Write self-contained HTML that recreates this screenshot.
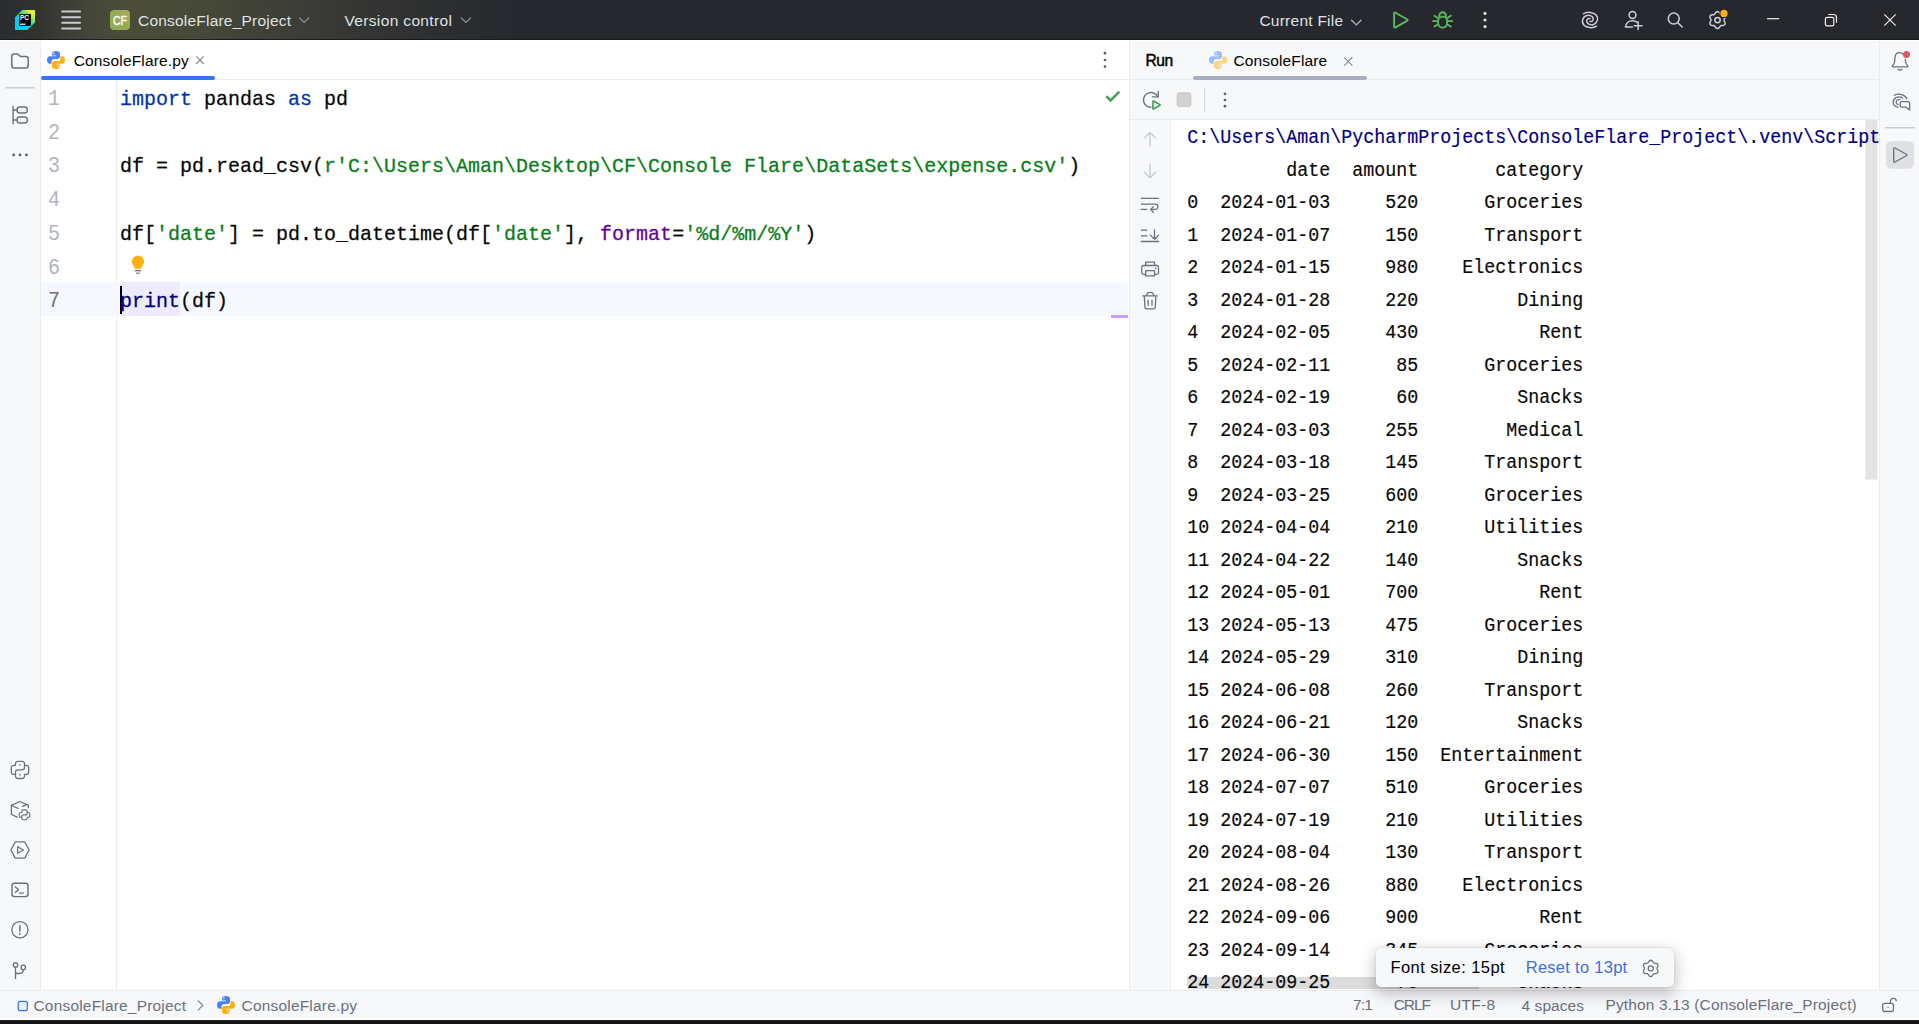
<!DOCTYPE html>
<html>
<head>
<meta charset="utf-8">
<title>ConsoleFlare_Project – ConsoleFlare.py</title>
<style>
*{box-sizing:border-box;margin:0;padding:0}
html,body{width:1919px;height:1024px;overflow:hidden;background:#f7f8fa;font-family:"Liberation Sans",sans-serif;}
.abs{position:absolute}
.t{position:absolute;line-height:20px;white-space:pre;font-size:15.5px;color:#6c707e}
svg{position:absolute;overflow:visible}
.ic{fill:none;stroke:#6c707e;stroke-width:1.25;stroke-linecap:round;stroke-linejoin:round}
.icw{fill:none;stroke:#ced0d6;stroke-width:1.3;stroke-linecap:round;stroke-linejoin:round}

/* ---------- title bar ---------- */
#titlebar{left:0;top:0;width:1919px;height:40px;border-bottom:1px solid #1b1c1f;
 background:linear-gradient(90deg,#2a2b2f 0px,#33342f 40px,#44463a 90px,#4b4d39 125px,#494b39 180px,#3f4037 270px,#353633 360px,#2c2d30 450px,#27282e 520px,#27282e 100%);}
#titlebar .t{color:#dfe1e5}

/* ---------- left tool strip ---------- */
#lefttb{left:0;top:40px;width:41px;height:950px;background:#f7f8fa;border-right:1px solid #ebecf0}

/* ---------- editor ---------- */
#editor{left:41px;top:40px;width:1088px;height:950px;background:#fff;overflow:hidden}
#edtabs{left:0;top:0;width:1088px;height:40px;border-bottom:1px solid #ebecf0;background:#fff}
#gutterline{left:75px;top:40px;width:1px;height:910px;background:#ebecf0}
.ln{position:absolute;left:7px;transform:scaleY(1.07);transform-origin:0 22.2px;font-family:"Liberation Mono",monospace;font-size:20px;line-height:33.75px;height:33.75px;color:#aeb3c2;white-space:pre}
.cl{position:absolute;left:79px;-webkit-text-stroke:.25px currentColor;transform:scaleY(1.03);transform-origin:0 22.2px;font-family:"Liberation Mono",monospace;font-size:20px;line-height:33.75px;height:33.75px;color:#080808;white-space:pre}
.kw{color:#0033b3}.st{color:#067d17}.na{color:#660099}.bi{color:#000080}

/* ---------- run tool window ---------- */
#splitline{left:1129px;top:40px;width:1px;height:950px;background:#ebecf0}
#run{left:1130px;top:40px;width:749px;height:950px;background:#f7f8fa;overflow:hidden}
#runhdr{left:0;top:0;width:749px;height:40px;border-bottom:1px solid #ebecf0}
#runbar{left:0;top:40px;width:749px;height:40px;border-bottom:1px solid #ebecf0}
#rungutter{left:0;top:80px;width:41px;height:870px;border-right:1px solid #ebecf0}
#console{left:41px;top:80px;width:708px;height:870px;background:#fff;overflow:hidden}
.co{position:absolute;left:16.3px;transform:scaleY(1.09);transform-origin:0 21.13px;-webkit-text-stroke:.16px currentColor;font-family:"Liberation Mono",monospace;font-size:18.33px;line-height:32.5px;height:32.5px;color:#080808;white-space:pre}

/* ---------- right tool strip ---------- */
#righttb{left:1879px;top:40px;width:40px;height:950px;background:#f7f8fa;border-left:1px solid #ebecf0}

/* ---------- status bar ---------- */
#status{left:0;top:990px;width:1919px;height:29px;background:#f7f8fa;border-top:1px solid #ebecf0}
#bottombar{left:0;top:1019px;width:1919px;height:5px;background:#141414;border-top:1px solid #fff;box-shadow:inset 0 1px 0 #222}
</style>
</head>
<body>

<!-- ================= TITLE BAR ================= -->
<div id="titlebar" class="abs">
  
  <!-- PyCharm logo -->
  <svg style="left:15px;top:10px" width="20" height="20" viewBox="0 0 20 20">
    <defs><linearGradient id="pcg" x1="0" y1="1" x2="1" y2="0">
      <stop offset="0" stop-color="#00cdfc"/><stop offset=".38" stop-color="#0ccbf0"/><stop offset=".62" stop-color="#4fd58f"/><stop offset=".85" stop-color="#e6f03a"/><stop offset="1" stop-color="#fcf40f"/></linearGradient></defs>
    <path d="M7.3 0H19a1 1 0 0 1 1 1v11.6L12.4 20H1a1 1 0 0 1-1-1V7.3z" fill="url(#pcg)"/>
    <rect x="4.2" y="4.1" width="11.7" height="11.7" fill="#000"/>
    <text x="4.9" y="10" font-family="Liberation Sans" font-weight="700" font-size="6.4" fill="#fff" textLength="9" lengthAdjust="spacingAndGlyphs">PC</text>
    <rect x="5.1" y="13.6" width="5.4" height="1.2" fill="#fff"/>
  </svg>
  <!-- main menu (hamburger) -->
  <!-- project badge -->
  <div class="abs" style="left:110px;top:10px;width:20px;height:20px;border-radius:4px;background:linear-gradient(45deg,#86ac52,#a6ab5e)"></div>
  <span class="abs" style="left:112.9px;top:11.2px;width:18px;line-height:20px;font-size:12.8px;color:#fff;-webkit-text-stroke:.4px #fff;transform:scaleX(.82);transform-origin:0 0;white-space:pre">CF</span>
  <!-- chevrons -->
  <svg style="left:0;top:0" width="1919" height="40" viewBox="0 0 1919 40">
    <path class="icw" style="stroke:#8d9098" d="M299.6 18l4.6 4.4 4.6-4.4"/>
    <path class="icw" style="stroke:#8d9098" d="M461.2 18l4.7 4.4 4.7-4.4"/>
    <path class="icw" style="stroke:#b4b8bf" d="M1351.6 20.3l4.7 4.6 4.7-4.6"/>
    <!-- main menu -->
    <g fill="#c9cbd1"><rect x="61.3" y="10.6" width="19.7" height="2" rx=".8"/><rect x="61.3" y="16.25" width="19.7" height="2" rx=".8"/><rect x="61.3" y="21.8" width="19.7" height="2" rx=".8"/><rect x="61.3" y="27.5" width="19.7" height="2" rx=".8"/></g>
    <!-- run -->
    <path d="M1394.10 13.60Q1394.10 12.00 1395.49 12.78L1407.01 19.27Q1408.40 20.05 1407.01 20.83L1395.49 27.32Q1394.10 28.10 1394.10 26.50Z" fill="none" stroke="#5fb865" stroke-width="1.85" stroke-linejoin="round"/>
    <!-- debug -->
    <g fill="none" stroke="#5fb865" stroke-width="1.8" stroke-linecap="round">
      <rect x="1438.1" y="16.7" width="9" height="10.9" rx="4.5"/>
      <path d="M1439.3 16.2a3.3 3.9 0 0 1 6.6 0" stroke-width="2"/>
      <path d="M1434.400 15.800l3.400 2.200M1433 21.200h4.400M1434.400 26.600l3.400-2.200M1450.800 15.800l-3.400 2.200M1452.200 21.200h-4.400M1450.800 26.600l-3.400-2.200"/>
    </g>
    <!-- more -->
    <circle cx="1485" cy="13.4" r="1.55" fill="#dfe1e5"/><circle cx="1485" cy="20" r="1.55" fill="#dfe1e5"/><circle cx="1485" cy="26.6" r="1.55" fill="#dfe1e5"/>
    <!-- AI assistant spiral -->
    <g class="icw" style="stroke-width:1.5">
      <path d="M1583.3 13.8C1587 11.6 1593.5 11.9 1596.2 15C1598.8 18 1597.6 22.6 1594 24.2C1591 25.6 1587.3 24.2 1586.8 21.5C1586.4 19.4 1588.3 18 1590 18.6"/>
      <path d="M1596.6 26.2C1593 28.4 1586.5 28.1 1583.8 25C1581.2 22 1582.4 17.4 1586 15.8C1589 14.4 1592.7 15.8 1593.2 18.5C1593.6 20.6 1591.7 22 1590 21.4"/>
    </g>
    <!-- code with me -->
    <g class="icw" style="stroke-width:1.5">
      <circle cx="1632.5" cy="15" r="3.4"/>
      <path d="M1632.4 27.1h-6.9c.3-3.6 3.1-6.3 7-6.3 1.9 0 3.500 .600 4.700 1.600"/>
      <path d="M1634.2 25.7h7.8M1638.100 21.700v7.900"/>
    </g>
    <!-- search -->
    <g class="icw" style="stroke-width:1.5"><circle cx="1673.75" cy="18.6" r="5.5"/><path d="M1677.8 22.800l4.400 4.200"/></g>
    <!-- settings -->
    <path class="icw" style="stroke-width:1.5" d="M1724.00,20.10 L1724.11,19.52 L1724.39,18.88 L1724.74,18.16 L1725.02,17.36 L1725.08,16.56 L1724.86,15.85 L1724.35,15.30 L1723.63,14.96 L1722.80,14.80 L1722.00,14.74 L1721.31,14.67 L1720.75,14.47 L1720.30,14.09 L1719.89,13.52 L1719.44,12.86 L1718.89,12.22 L1718.23,11.77 L1717.50,11.60 L1716.77,11.77 L1716.11,12.22 L1715.56,12.86 L1715.11,13.52 L1714.70,14.09 L1714.25,14.47 L1713.69,14.67 L1713.00,14.74 L1712.20,14.80 L1711.37,14.96 L1710.65,15.30 L1710.14,15.85 L1709.92,16.56 L1709.98,17.36 L1710.26,18.16 L1710.61,18.88 L1710.89,19.52 L1711.00,20.10 L1710.89,20.68 L1710.61,21.32 L1710.26,22.04 L1709.98,22.84 L1709.92,23.64 L1710.14,24.35 L1710.65,24.90 L1711.37,25.24 L1712.20,25.40 L1713.00,25.46 L1713.69,25.53 L1714.25,25.73 L1714.70,26.11 L1715.11,26.68 L1715.56,27.34 L1716.11,27.98 L1716.77,28.43 L1717.50,28.60 L1718.23,28.43 L1718.89,27.98 L1719.44,27.34 L1719.89,26.68 L1720.30,26.11 L1720.75,25.73 L1721.31,25.53 L1722.00,25.46 L1722.80,25.40 L1723.63,25.24 L1724.35,24.90 L1724.86,24.35 L1725.08,23.64 L1725.02,22.84 L1724.74,22.04 L1724.39,21.32 L1724.11,20.68Z"/>
    <circle class="icw" style="stroke-width:1.5" cx="1717.5" cy="20.1" r="2.7"/>
    <circle cx="1724" cy="13.4" r="4.6" fill="#27282e"/>
    <circle cx="1724" cy="13.4" r="3.6" fill="#ffaf0f"/>
    <!-- window controls -->
    <path d="M1767.1 18.7h12.100" stroke="#f0f1f2" stroke-width="1.2" fill="none"/>
    <g fill="none" stroke="#f0f1f2" stroke-width="1.2">
      <rect x="1825.4" y="17.400" width="8.400" height="8.400" rx="1.6"/>
      <path d="M1828.300 14.500h5.200a3 3 0 0 1 3 3v5.200"/>
    </g>
    <path d="M1884.300 14.300l11.400 11.400M1895.700 14.300l-11.400 11.400" stroke="#f0f1f2" stroke-width="1.1" fill="none"/>
  </svg>
  <span class="t" style="left:138px;top:10.5px;letter-spacing:.21px">ConsoleFlare_Project</span>
  <span class="t" style="left:344.4px;top:10.5px;letter-spacing:.36px">Version control</span>
  <span class="t" style="left:1259.4px;top:10.5px;letter-spacing:.25px">Current File</span>
</div>

<div class="abs" style="left:0;top:40px;width:1919px;height:1px;background:#fff;z-index:5"></div>
<!-- ================= LEFT STRIP ================= -->
<div id="lefttb" class="abs"></div>

<!-- ================= EDITOR ================= -->
<div id="editor" class="abs">
  <div id="edtabs" class="abs">
    <span class="t" style="left:32.7px;top:10.9px;letter-spacing:.16px;color:#000">ConsoleFlare.py</span>
    <div class="abs" style="left:0;top:35.7px;width:174px;height:4.3px;background:#3574f0;border-radius:2px"></div>
  </div>
  <div id="gutterline" class="abs"></div>
  <!-- current line highlight -->
  <div class="abs" style="left:0;top:242.3px;width:1087px;height:33.5px;background:#f5f8fe"></div>
  <div class="abs" style="left:79px;top:242.3px;width:60px;height:33.5px;background:#edebfc"></div>
  <div class="abs" style="left:79px;top:246.3px;width:2px;height:27.5px;background:#000"></div>
  <!-- error stripe mark -->
  <div class="abs" style="left:1070px;top:275.2px;width:17px;height:2.7px;background:#cb9bfa"></div>
  <div id="lines">
<div class="ln" style="top:42.80px">1</div>
<div class="cl" style="top:42.80px"><span class="kw">import</span> pandas <span class="kw">as</span> pd</div>
<div class="ln" style="top:76.55px">2</div>
<div class="ln" style="top:110.30px">3</div>
<div class="cl" style="top:110.30px">df = pd.read_csv(<span class="st">r'C:\Users\Aman\Desktop\CF\Console Flare\DataSets\expense.csv'</span>)</div>
<div class="ln" style="top:144.05px">4</div>
<div class="ln" style="top:177.80px">5</div>
<div class="cl" style="top:177.80px">df[<span class="st">'date'</span>] = pd.to_datetime(df[<span class="st">'date'</span>], <span class="na">format</span>=<span class="st">'%d/%m/%Y'</span>)</div>
<div class="ln" style="top:211.55px">6</div>
<div class="ln" style="top:245.30px;color:#6c707e">7</div>
<div class="cl" style="top:245.30px"><span class="bi">print</span>(df)</div>
</div>
</div>
<div id="splitline" class="abs"></div>

<!-- ================= RUN ================= -->
<div id="run" class="abs">
  <div id="runhdr" class="abs">
    <span class="t" style="left:15.6px;top:10.9px;font-size:15.6px;font-weight:400;-webkit-text-stroke:.45px #000;letter-spacing:-.5px;color:#000">Run</span>
    <span class="t" style="left:103.5px;top:10.8px;letter-spacing:.13px;color:#000">ConsoleFlare</span>
    <div class="abs" style="left:63px;top:36px;width:174px;height:4px;background:#a8adbd;border-radius:2px"></div>
  </div>
  <div id="runbar" class="abs"></div>
  <div id="rungutter" class="abs"></div>
  <div id="console" class="abs">
<div class="abs" style="left:695px;top:0;width:11.4px;height:359.3px;background:#e3e3e3;box-shadow:0 0 0 1px #f0f0f0"></div>
<div class="abs" style="left:16px;top:857px;width:292px;height:11.5px;background:#dcdcdc"></div>
<div class="co" style="top:3.10px;color:#000080">C:\Users\Aman\PycharmProjects\ConsoleFlare_Project\.venv\Scripts\python.exe C:\Users\Aman\PycharmProjects\ConsoleFlare_Project\ConsoleFlare.py</div>
<div class="co" style="top:35.60px">         date  amount       category</div>
<div class="co" style="top:68.10px">0  2024-01-03     520      Groceries</div>
<div class="co" style="top:100.60px">1  2024-01-07     150      Transport</div>
<div class="co" style="top:133.10px">2  2024-01-15     980    Electronics</div>
<div class="co" style="top:165.60px">3  2024-01-28     220         Dining</div>
<div class="co" style="top:198.10px">4  2024-02-05     430           Rent</div>
<div class="co" style="top:230.60px">5  2024-02-11      85      Groceries</div>
<div class="co" style="top:263.10px">6  2024-02-19      60         Snacks</div>
<div class="co" style="top:295.60px">7  2024-03-03     255        Medical</div>
<div class="co" style="top:328.10px">8  2024-03-18     145      Transport</div>
<div class="co" style="top:360.60px">9  2024-03-25     600      Groceries</div>
<div class="co" style="top:393.10px">10 2024-04-04     210      Utilities</div>
<div class="co" style="top:425.60px">11 2024-04-22     140         Snacks</div>
<div class="co" style="top:458.10px">12 2024-05-01     700           Rent</div>
<div class="co" style="top:490.60px">13 2024-05-13     475      Groceries</div>
<div class="co" style="top:523.10px">14 2024-05-29     310         Dining</div>
<div class="co" style="top:555.60px">15 2024-06-08     260      Transport</div>
<div class="co" style="top:588.10px">16 2024-06-21     120         Snacks</div>
<div class="co" style="top:620.60px">17 2024-06-30     150  Entertainment</div>
<div class="co" style="top:653.10px">18 2024-07-07     510      Groceries</div>
<div class="co" style="top:685.60px">19 2024-07-19     210      Utilities</div>
<div class="co" style="top:718.10px">20 2024-08-04     130      Transport</div>
<div class="co" style="top:750.60px">21 2024-08-26     880    Electronics</div>
<div class="co" style="top:783.10px">22 2024-09-06     900           Rent</div>
<div class="co" style="top:815.60px">23 2024-09-14     345      Groceries</div>
<div class="co" style="top:848.10px">24 2024-09-25      70         Snacks</div>
<div class="co" style="top:880.60px">25 2024-10-02     410           Rent</div>
</div>
</div>

<!-- ================= RIGHT STRIP ================= -->
<div id="righttb" class="abs"></div>


<!-- ================= STATUS BAR ================= -->
<div id="status" class="abs">
  <span class="t" style="left:33.5px;top:5.3px;letter-spacing:.18px">ConsoleFlare_Project</span>
  <span class="t" style="left:241.5px;top:5.3px;letter-spacing:.19px">ConsoleFlare.py</span>
  <span class="t" style="left:1353px;top:4.3px;letter-spacing:-.9px">7:1</span>
  <span class="t" style="left:1393.7px;top:4.3px;letter-spacing:-1.04px">CRLF</span>
  <span class="t" style="left:1450px;top:4.3px;letter-spacing:.32px">UTF-8</span>
  <span class="t" style="left:1521.6px;top:5.3px;letter-spacing:.04px">4 spaces</span>
  <span class="t" style="left:1605.4px;top:4.3px;letter-spacing:.15px">Python 3.13 (ConsoleFlare_Project)</span>
</div>
<div id="bottombar" class="abs"></div>


<!-- ================= FONT SIZE POPUP + h-scrollbar ================= -->
<div id="popup" class="abs" style="left:1376.3px;top:947.8px;width:297.3px;height:39.2px;background:#f7f8fa;border-radius:5px;box-shadow:0 5px 16px 1px rgba(0,0,0,.26),0 0 2px rgba(0,0,0,.14)">
  <span class="t" style="left:14.2px;top:9.4px;font-size:16.5px;letter-spacing:.42px;color:#000">Font size: 15pt</span>
  <span class="t" style="left:149.4px;top:9.4px;font-size:16.5px;letter-spacing:.28px;color:#416fd9">Reset to 13pt</span>
  <svg style="left:0;top:0" width="297" height="38" viewBox="1376.3 947.7 297 38"><path class="ic" style="stroke-width:1.3" d="M1657.25,968.10 L1657.35,967.54 L1657.62,966.93 L1657.95,966.24 L1658.21,965.47 L1658.27,964.71 L1658.06,964.02 L1657.57,963.50 L1656.88,963.17 L1656.09,963.01 L1655.32,962.95 L1654.66,962.88 L1654.12,962.69 L1653.70,962.32 L1653.30,961.78 L1652.86,961.15 L1652.33,960.54 L1651.70,960.11 L1651.00,959.95 L1650.30,960.11 L1649.67,960.54 L1649.14,961.15 L1648.70,961.78 L1648.30,962.32 L1647.88,962.69 L1647.34,962.88 L1646.68,962.95 L1645.91,963.01 L1645.12,963.17 L1644.43,963.50 L1643.94,964.02 L1643.73,964.71 L1643.79,965.47 L1644.05,966.24 L1644.38,966.93 L1644.65,967.54 L1644.75,968.10 L1644.65,968.66 L1644.38,969.27 L1644.05,969.96 L1643.79,970.73 L1643.73,971.49 L1643.94,972.18 L1644.43,972.70 L1645.12,973.03 L1645.91,973.19 L1646.68,973.25 L1647.34,973.32 L1647.88,973.51 L1648.30,973.88 L1648.70,974.42 L1649.14,975.05 L1649.67,975.66 L1650.30,976.09 L1651.00,976.25 L1651.70,976.09 L1652.33,975.66 L1652.86,975.05 L1653.30,974.42 L1653.70,973.88 L1654.12,973.51 L1654.66,973.32 L1655.32,973.25 L1656.09,973.19 L1656.88,973.03 L1657.57,972.70 L1658.06,972.18 L1658.27,971.49 L1658.21,970.73 L1657.95,969.96 L1657.62,969.27 L1657.35,968.66Z"/><circle class="ic" style="stroke-width:1.3" cx="1651" cy="968.1" r="2.5"/></svg>
</div>

<!-- ================= ICON OVERLAY (page coordinates) ================= -->
<svg id="icons" style="left:0;top:0;pointer-events:none" width="1919" height="1024" viewBox="0 0 1919 1024">

  <!-- ===== left strip ===== -->
  <g class="ic" style="stroke-width:1.5">
    <path d="M11.800 56.400a2.500 2.500 0 0 1 2.500-2.500h2.900a1.600 1.600 0 0 1 1.200.500l2.100 2.200h5.200a2.500 2.500 0 0 1 2.500 2.500v6.300a2.500 2.500 0 0 1-2.500 2.500h-11.400a2.500 2.500 0 0 1-2.500-2.500z"/>
  </g>
  <path d="M5.200 87.800h29.600" stroke="#c9ccd6" stroke-width="1.400" fill="none"/>
  <g class="ic" style="stroke-width:1.400">
    <path d="M13.100 106.300v17.400M13.100 110h3.900M13.100 120h3.900"/>
    <rect x="17" y="107" width="10.300" height="6" rx="2.700"/>
    <rect x="17" y="117" width="10.300" height="6" rx="2.700"/>
  </g>
  <g fill="#5a5d6b"><circle cx="13.700" cy="154.900" r="1.400"/><circle cx="20" cy="154.900" r="1.400"/><circle cx="26.400" cy="154.900" r="1.400"/></g>

  <!-- python console -->
  <g class="ic" style="stroke-width:1.300">
    <path d="M15.500 765.400V763.700A2.400 2.400 0 0 1 17.900 761.300H22.100A2.400 2.400 0 0 1 24.500 763.700V765.400H26.300A2.400 2.400 0 0 1 28.700 767.800V772A2.400 2.400 0 0 1 26.300 774.400H24.500V776.100A2.400 2.400 0 0 1 22.100 778.500H17.900A2.400 2.400 0 0 1 15.500 776.100V774.400H13.700A2.400 2.400 0 0 1 11.300 772V767.800A2.400 2.400 0 0 1 13.700 765.400Z"/>
    <path d="M15.500 774.400V772.300a2.400 2.400 0 0 1 2.400-2.400h4.200a2.400 2.400 0 0 0 2.400-2.400V765.400"/>
  </g>
  <g fill="#6c707e"><rect x="19.200" y="764.100" width="1.500" height="1.500"/><rect x="19.200" y="774.100" width="1.500" height="1.500"/></g>

  <!-- python packages -->
  <g class="ic" style="stroke-width:1.300">
    <path d="M28.300 807.600V805.300L19.900 801.500L11.400 805.300V814.500L17.200 817.200"/>
    <path d="M11.400 805.300L18.300 808.500M26.600 804.600l-4 1.800"/>
    <path d="M21.800 812.500v-1.100a1.500 1.500 0 0 1 1.500-1.500h2.400a1.500 1.500 0 0 1 1.500 1.500v1.100h1.100a1.500 1.500 0 0 1 1.500 1.500v1.700a1.500 1.500 0 0 1-1.500 1.500h-1.100v1.100a1.500 1.500 0 0 1-1.500 1.500h-2.400a1.500 1.500 0 0 1-1.500-1.500v-1.100h-1.100a1.500 1.500 0 0 1-1.500-1.500v-1.700a1.500 1.500 0 0 1 1.500-1.500z" style="stroke-width:1.100"/>
    <path d="M21.800 817.200v-.9a1.400 1.400 0 0 1 1.400-1.400h2.600a1.400 1.400 0 0 0 1.400-1.400v-1" style="stroke-width:1.100"/>
  </g>

  <!-- services -->
  <g class="ic" style="stroke-width:1.300">
    <path d="M10.800 850L15.300 841.900H24.700L29.200 850L24.700 858.100H15.300Z"/>
    <path d="M17.700 846.700v6.600l5.700-3.300z"/>
  </g>

  <!-- terminal -->
  <g class="ic" style="stroke-width:1.400">
    <rect x="12" y="883.300" width="16" height="13.300" rx="2.500"/>
    <path d="M15.400 887l3.200 2.700-3.200 2.700M19.400 893.100h4"/>
  </g>

  <!-- problems -->
  <g class="ic" style="stroke-width:1.300">
    <circle cx="19.900" cy="929.800" r="8.100"/>
    <path d="M19.900 925.800v5.500" style="stroke-width:1.500"/>
  </g>
  <circle cx="19.900" cy="933.700" r=".95" fill="#6c707e"/>

  <!-- git -->
  <g class="ic" style="stroke-width:1.300">
    <circle cx="15.500" cy="964.900" r="2.200"/>
    <circle cx="23.300" cy="967.400" r="2.200"/>
    <path d="M15.500 967.200v11.200M23.300 969.700c0 2.700-2.100 3.800-4.600 3.800h-3.200"/>
  </g>

  <!-- ===== editor tab ===== -->
  <g transform="translate(47 51)"><path fill="#4682fa" d="M8.9 0C6.300 0 5.100 1.100 5.100 2.700V4.600H9V5.200H2.900C1.100 5.200 0 6.600 0 9C0 11.400 1.100 12.800 2.900 12.800H4.500V10.500C4.500 8.900 5.700 7.900 7.300 7.900H10.700C12.100 7.900 13 7 13 5.600V2.700C13 1.100 11.500 0 8.900 0Z"/>
      <circle cx="7" cy="2.400" r=".8" fill="#cfe0ff"/>
      <path fill="#ffaf0f" d="M9.100 18C11.700 18 12.900 16.900 12.900 15.300V13.400H9V12.800H15.100C16.900 12.800 18 11.400 18 9C18 6.600 16.900 5.200 15.100 5.200H13.500V7.500C13.500 9.100 12.300 10.100 10.700 10.100H7.300C5.900 10.100 5 11 5 12.400V15.300C5 16.900 6.500 18 9.100 18Z"/>
      <circle cx="11" cy="15.600" r=".8" fill="#fff1c9"/></g>
  <path d="M196.200 56.400l7.600 7.600M203.800 56.400l-7.600 7.600" stroke="#818594" stroke-width="1.100" fill="none"/>
  <g fill="#5a5d6b"><circle cx="1105" cy="53.200" r="1.350"/><circle cx="1105" cy="60" r="1.350"/><circle cx="1105" cy="66.600" r="1.350"/></g>
  <path d="M1106.3 96.3l4.3 4.2 8.7-8.8" stroke="#4aa35c" stroke-width="2.6" fill="none" stroke-linejoin="miter"/>

  <!-- intention bulb -->
  <path fill="#ffaf0f" d="M138 255.400a6.100 6.100 0 0 1 6.100 6.100c0 2.500-1.500 3.700-2.300 5l-.7 2.300h-6.200l-.7-2.300c-.8-1.300-2.300-2.500-2.300-5a6.100 6.100 0 0 1 6.100-6.100z"/>
  <rect x="134.900" y="271.100" width="6.200" height="1.500" fill="#dfe0e4"/>
  <rect x="134.900" y="270" width="6.200" height="1.150" fill="#6c707e"/>
  <rect x="136" y="272.700" width="4" height="1.200" fill="#8b8e9b"/>

  <!-- ===== run tool window ===== -->
  <g opacity=".5"><g transform="translate(1209 51)"><path fill="#4682fa" d="M8.9 0C6.300 0 5.100 1.100 5.100 2.700V4.600H9V5.200H2.900C1.100 5.200 0 6.600 0 9C0 11.400 1.100 12.800 2.900 12.800H4.500V10.500C4.500 8.900 5.700 7.900 7.300 7.900H10.700C12.100 7.900 13 7 13 5.600V2.700C13 1.100 11.500 0 8.900 0Z"/>
      <circle cx="7" cy="2.400" r=".8" fill="#cfe0ff"/>
      <path fill="#ffaf0f" d="M9.100 18C11.700 18 12.900 16.900 12.900 15.300V13.400H9V12.800H15.100C16.900 12.800 18 11.400 18 9C18 6.600 16.900 5.200 15.100 5.200H13.500V7.500C13.500 9.100 12.300 10.100 10.700 10.100H7.300C5.900 10.100 5 11 5 12.400V15.300C5 16.900 6.500 18 9.100 18Z"/>
      <circle cx="11" cy="15.600" r=".8" fill="#fff1c9"/></g></g>
  <path d="M1344.200 57.400l8.200 8.200M1352.400 57.400l-8.200 8.200" stroke="#818594" stroke-width="1.100" fill="none"/>
  <!-- rerun -->
  <g class="ic" style="stroke-width:1.400">
    <path d="M1150.800 107.300A7.400 7.400 0 1 1 1157.600 96.800"/>
    <path d="M1158.200 91.500v5.400h-5.700"/>
  </g>
  <path d="M1152.90 101.80Q1152.90 100.60 1153.94 101.20L1159.56 104.40Q1160.60 105.00 1159.56 105.60L1153.94 108.80Q1152.90 109.40 1152.90 108.20Z" fill="#eaf6ec" stroke="#3f9e55" stroke-width="1.6" stroke-linejoin="round"/>
  <!-- stop (disabled) -->
  <rect x="1177" y="92.700" width="14" height="14" rx="2.500" fill="#d1d1d2" stroke="#c7c7ca" stroke-width=".8"/>
  <path d="M1204.500 88v23.800" stroke="#d6d8de" stroke-width="1"/>
  <g fill="#5a5d6b"><circle cx="1225" cy="93.800" r="1.350"/><circle cx="1225" cy="100" r="1.350"/><circle cx="1225" cy="106.200" r="1.350"/></g>

  <!-- console gutter -->
  <g class="ic" style="stroke:#c6c8d0;stroke-width:1.300">
    <path d="M1150 146v-13.500M1144.500 137.900l5.500-5.500 5.500 5.500"/>
    <path d="M1150 163.900v13.700M1144.500 172.300l5.500 5.500 5.500-5.500"/>
  </g>
  <g class="ic" style="stroke-width:1.300">
    <!-- soft wrap -->
    <path d="M1141.200 198.300h17.400M1141.200 204.100h14a2.650 2.650 0 0 1 0 5.300h-4.300M1141.200 209.400h5.500M1153.400 206.600l-2.800 2.800 2.800 2.800"/>
    <!-- scroll to end -->
    <path d="M1141.200 230.100h5.700M1141.200 235.900h5.700M1141.200 241.500h17.400M1154.500 230v9M1150.300 235.100l4.200 4.200 4.200-4.200"/>
    <!-- print -->
    <path d="M1145.500 274.400h-2a1.800 1.800 0 0 1-1.800-1.800v-5.300a1.800 1.800 0 0 1 1.800-1.800h13.200a1.800 1.800 0 0 1 1.800 1.800v5.300a1.800 1.800 0 0 1-1.800 1.800h-2"/>
    <path d="M1145.700 265.400v-3.200h8.900v3.200M1145.700 270.700h8.900v5.100h-8.900z"/>
    <!-- clear all -->
    <path d="M1142.900 295.800h14.400M1146.600 295.600a3.500 3.200 0 0 1 7 0M1144.300 296l.6 11a2 2 0 0 0 2 1.900h6.400a2 2 0 0 0 2-1.900l.6-11M1148.100 300.100v5.200M1152 300.100v5.200"/>
  </g>
  <circle cx="1155.700" cy="268.400" r=".8" fill="#6c707e"/>

  <!-- ===== right strip ===== -->
  <g class="ic" style="stroke-width:1.300">
    <path d="M1903.200 54.300c-1-1.100-2.100-1.600-3.500-1.600-2.700 0-4.500 2-4.700 4.800l-.3 3.700c-.1 1.500-.7 2.600-1.500 3.700l-.9 1.200c-.2.300 0 .7.400.7h14.800c.4 0 .6-.4.400-.7l-.9-1.200c-.8-1.100-1.400-2.200-1.500-3.700l-.2-1.800"/>
    <path d="M1898.100 69.300c.5.500 1.200.7 1.900.7s1.400-.2 1.900-.7"/>
  </g>
  <circle cx="1906.500" cy="54.600" r="3.500" fill="#e55765"/>
  <g class="ic" style="stroke-width:1.300">
    <path d="M1894.100 95.300C1898.200 93 1904.600 94.200 1906.800 98.700"/>
    <path d="M1902.700 98C1899.100 95.700 1893.400 97.600 1893.200 101.900C1893.100 104.600 1895.200 106.700 1897.900 107.200"/>
    <path d="M1899.900 99.600C1897.600 99.200 1896 100.700 1896.200 102.500C1896.300 103.600 1897.100 104.400 1898.100 104.600"/>
    <path d="M1901.700 101.600h6.500a1.400 1.400 0 0 1 1.400 1.400v7l-3.400-2.800h-4.500a1.400 1.400 0 0 1-1.400-1.400v-2.800a1.400 1.400 0 0 1 1.400-1.400z" fill="#f7f8fa"/>
  </g>
  <path d="M1885 127.700h30" stroke="#c9ccd6" stroke-width="1.400" fill="none"/>
  <rect x="1886" y="141" width="28" height="27.800" rx="5.500" fill="#dfe0e4"/>
  <path class="ic" style="stroke-width:1.3" d="M1893.70 148.80Q1893.70 147.30 1895.01 148.03L1906.29 154.27Q1907.60 155.00 1906.29 155.73L1895.01 161.97Q1893.70 162.70 1893.70 161.20Z"/>

  <!-- ===== status bar ===== -->
  <rect x="18.200" y="1001.400" width="9.200" height="9.200" rx="2.200" fill="#e7effd" stroke="#3574f0" stroke-width="1.200"/>
  <path d="M198.200 1000.900l4.700 4.500-4.700 4.500" stroke="#818594" stroke-width="1.300" fill="none" stroke-linecap="round" stroke-linejoin="round"/>
  <g transform="translate(217 996)"><path fill="#4682fa" d="M8.9 0C6.300 0 5.100 1.100 5.100 2.700V4.600H9V5.200H2.900C1.100 5.200 0 6.600 0 9C0 11.400 1.100 12.800 2.900 12.800H4.500V10.500C4.500 8.900 5.700 7.900 7.300 7.900H10.700C12.100 7.900 13 7 13 5.600V2.700C13 1.100 11.500 0 8.900 0Z"/>
      <circle cx="7" cy="2.400" r=".8" fill="#cfe0ff"/>
      <path fill="#ffaf0f" d="M9.100 18C11.700 18 12.900 16.900 12.900 15.300V13.400H9V12.800H15.100C16.900 12.800 18 11.400 18 9C18 6.600 16.900 5.200 15.100 5.200H13.500V7.500C13.500 9.100 12.300 10.100 10.700 10.100H7.300C5.900 10.100 5 11 5 12.400V15.300C5 16.900 6.500 18 9.100 18Z"/>
      <circle cx="11" cy="15.600" r=".8" fill="#fff1c9"/></g>
  <g class="ic" style="stroke-width:1.300">
    <rect x="1882.700" y="1003.300" width="10.700" height="8.200" rx="1.800"/>
    <path d="M1888 1007.400h.1M1890.400 1003.200v-2a3 3 0 0 1 5.900-.5" />
  </g>
</svg>

</body>
</html>
